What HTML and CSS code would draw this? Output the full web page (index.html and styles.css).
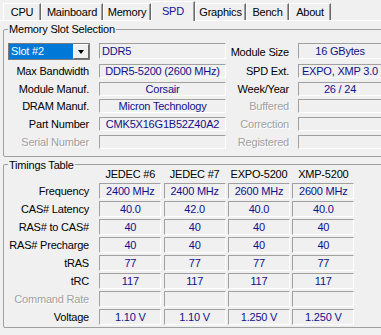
FILE: index.html
```html
<!DOCTYPE html>
<html lang="en">
<head>
<meta charset="UTF-8">
<title>CPU-Z SPD</title>
<link rel="stylesheet" href="styles.css">
</head>
<body>
  <div class="tabs">
    <div class="tab">CPU</div>
    <div class="tab">Mainboard</div>
    <div class="tab">Memory</div>
    <div class="tab active">SPD</div>
    <div class="tab">Graphics</div>
    <div class="tab">Bench</div>
    <div class="tab">About</div>
  </div>

  <fieldset class="group slot-group">
    <legend>Memory Slot Selection</legend>
    <div class="slot">
      <div class="combo">
        <div class="combo-value">Slot #2</div>
        <div class="combo-btn"><span class="arrow"></span></div>
      </div>
      <div class="fld fld-top left">DDR5</div>
      <div class="lbl lbl-r">Module Size</div>
      <div class="fld fld-top">16 GBytes</div>

      <div class="lbl">Max Bandwidth</div>
      <div class="fld">DDR5-5200 (2600 MHz)</div>
      <div class="lbl lbl-r">SPD Ext.</div>
      <div class="fld">EXPO, XMP 3.0</div>

      <div class="lbl">Module Manuf.</div>
      <div class="fld">Corsair</div>
      <div class="lbl lbl-r">Week/Year</div>
      <div class="fld">26 / 24</div>

      <div class="lbl">DRAM Manuf.</div>
      <div class="fld">Micron Technology</div>
      <div class="lbl lbl-r dis">Buffered</div>
      <div class="fld"></div>

      <div class="lbl">Part Number</div>
      <div class="fld">CMK5X16G1B52Z40A2</div>
      <div class="lbl lbl-r dis">Correction</div>
      <div class="fld"></div>

      <div class="lbl dis">Serial Number</div>
      <div class="fld"></div>
      <div class="lbl lbl-r dis">Registered</div>
      <div class="fld"></div>
    </div>
  </fieldset>

  <fieldset class="group timing-group">
    <legend>Timings Table</legend>
    <div class="timings">
      <div></div>
      <div class="head">JEDEC #6</div>
      <div class="head">JEDEC #7</div>
      <div class="head">EXPO-5200</div>
      <div class="head">XMP-5200</div>

      <div class="lbl">Frequency</div>
      <div class="fld">2400 MHz</div>
      <div class="fld">2400 MHz</div>
      <div class="fld">2600 MHz</div>
      <div class="fld">2600 MHz</div>

      <div class="lbl">CAS# Latency</div>
      <div class="fld">40.0</div>
      <div class="fld">42.0</div>
      <div class="fld">40.0</div>
      <div class="fld">40.0</div>

      <div class="lbl">RAS# to CAS#</div>
      <div class="fld">40</div>
      <div class="fld">40</div>
      <div class="fld">40</div>
      <div class="fld">40</div>

      <div class="lbl">RAS# Precharge</div>
      <div class="fld">40</div>
      <div class="fld">40</div>
      <div class="fld">40</div>
      <div class="fld">40</div>

      <div class="lbl">tRAS</div>
      <div class="fld">77</div>
      <div class="fld">77</div>
      <div class="fld">77</div>
      <div class="fld">77</div>

      <div class="lbl">tRC</div>
      <div class="fld">117</div>
      <div class="fld">117</div>
      <div class="fld">117</div>
      <div class="fld">117</div>

      <div class="lbl dis">Command Rate</div>
      <div class="fld"></div>
      <div class="fld"></div>
      <div class="fld"></div>
      <div class="fld"></div>

      <div class="lbl">Voltage</div>
      <div class="fld">1.10 V</div>
      <div class="fld">1.10 V</div>
      <div class="fld">1.250 V</div>
      <div class="fld">1.250 V</div>
    </div>
  </fieldset>
</body>
</html>
```

FILE: styles.css
```css
* {
  box-sizing: border-box;
}

html, body {
  margin: 0;
}

body {
  width: 381px;
  height: 335px;
  overflow: hidden;
  background-color: #f0f0f0;
  font-family: "Liberation Sans", Arial, sans-serif;
  font-size: 11px;
  letter-spacing: -0.2px;
  color: #000;
}

/* tab strip */
.tabs {
  display: flex;
  align-items: flex-end;
  height: 21px;
  padding-left: 3px;
  border-bottom: 1px solid #fff;
}
.tab {
  height: 17px;
  line-height: 16px;
  text-align: center;
  white-space: nowrap;
  border-top: 1px solid #fff;
  border-left: 1px solid #fff;
  border-right: 1px solid #696969;
  box-shadow: inset -1px 0 #a0a0a0;
}
.tab:nth-child(1) { width: 38px; }
.tab:nth-child(2) { width: 62px; }
.tab:nth-child(3) { width: 48px; }
.tab:nth-child(4) { width: 44px; }
.tab:nth-child(5) { width: 51px; }
.tab:nth-child(6) { width: 43px; }
.tab:nth-child(7) { width: 42px; }
.tab.active {
  height: 20px;
  line-height: 18px;
  margin-bottom: -1px;
  color: #1010a0;
  background-color: #f0f0f0;
  position: relative;
}

/* group boxes */
.group {
  width: 396px;
  min-width: 0;
  margin: 1px 0 0 3px;
  padding: 0;
  border: 1px solid #a0a0a0;
  border-radius: 2px;
}
.group legend {
  margin-left: 4px;
  padding: 0 1px;
  line-height: 14px;
}
.slot-group {
  padding: 7px 0 7px 0;
}
.timing-group {
  padding: 0 0 2px 0;
}

.slot {
  display: grid;
  grid-template-columns: 91px 127px 72px 84px;
  grid-template-rows: 17px repeat(5, 14px);
  row-gap: 3.75px;
  margin-left: 4px;
}

.timings {
  display: grid;
  grid-template-columns: 89px repeat(4, 62px);
  grid-template-rows: 13px repeat(8, 16px);
  column-gap: 2.33px;
  row-gap: 2px;
  margin: -4px 0 0 4px;
}

.lbl {
  align-self: center;
  text-align: right;
  white-space: nowrap;
  padding-right: 10px;
  line-height: 14px;
}
.lbl-r {
  padding-right: 9px;
}
.timings .lbl {
  padding-right: 8px;
}
.dis {
  color: #a0a0a0;
  text-shadow: 1px 1px 0 #fff;
}

.head {
  text-align: center;
  line-height: 13px;
  white-space: nowrap;
}

/* sunken value boxes */
.fld {
  border: 1px solid;
  border-color: #a0a0a0 #fff #fff #a0a0a0;
  color: #10108c;
  text-align: center;
  line-height: 12px;
  white-space: nowrap;
  overflow: hidden;
}
.fld-top {
  height: 16px;
  line-height: 14px;
  align-self: start;
}
.fld.left {
  text-align: left;
  padding-left: 2px;
}
.timings .fld {
  line-height: 14px;
}

/* slot combo box */
.combo {
  display: flex;
  width: 82px;
  height: 17px;
  border: 1px solid #7a7a7a;
  background-color: #fff;
}
.combo-value {
  flex: 1;
  padding-left: 2px;
  line-height: 15px;
  background-color: #0078d7;
  color: #fff;
}
.combo-btn {
  display: flex;
  align-items: center;
  justify-content: center;
  width: 16px;
  background-color: #f0f0f0;
  border: 1px solid;
  border-color: #fff #696969 #696969 #fff;
}
.arrow {
  width: 0;
  height: 0;
  border-left: 3.5px solid transparent;
  border-right: 3.5px solid transparent;
  border-top: 4px solid #000;
}
```
